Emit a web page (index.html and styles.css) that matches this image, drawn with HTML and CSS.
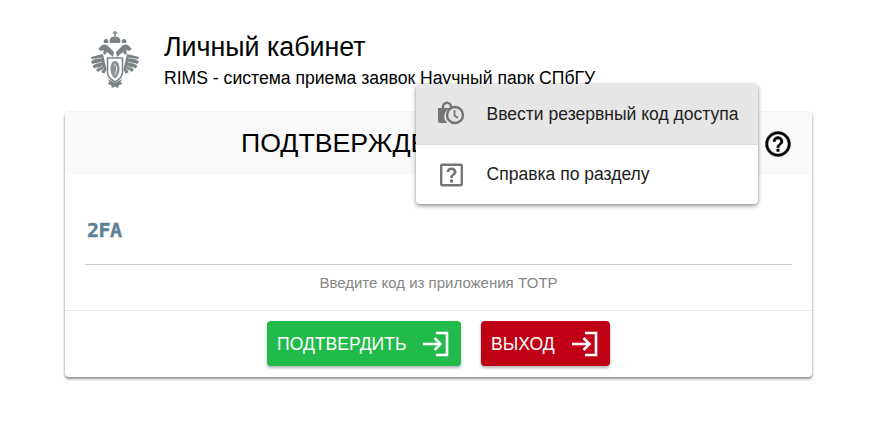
FILE: index.html
```html
<html>

<head>
  <meta charset="utf-8">
  <link rel="stylesheet" href="styles.css">
</head>

<body>
  <div class="page-header">
    <svg class="crest" viewBox="0 0 48 60" width="48" height="60">
      <g fill="#7b8386">
        <!-- crown -->
        <rect x="23.200" y="1" width="1.600" height="5"/>
        <rect x="21.800" y="2.300" width="4.400" height="1.300"/>
        <path d="M19 13c-1.500-4 1-6.500 5-6.500s6.500 2.500 5 6.500z"/>
        <path d="M13 13c-1-2 0-4 2-4s3 2 2 4zM31 13c-1-2 0-4 2-4s3 2 2 4z"/>
        <!-- heads and necks -->
        <path d="M7 19l3-3c2-2 5-2 7 0l6 6-1 5-6-5-2 3-2-2 1-3-3 1z"/>
        <path d="M41 19l-3-3c-2-2-5-2-7 0l-6 6 1 5 6-5 2 3 2-2-1-3 3 1z"/>
        <!-- wings -->
        <path d="M12 24L0 27l1 2.500 3-.5-4 2.500 1.500 2.500 3.500-1-3.500 3 2 2.500 3.500-2-2 3.500 2.500 2 3-3 0 3.500 3 1 2-4z"/>
        <path d="M36 24l12 3-1 2.500-3-.5 4 2.500-1.500 2.500-3.500-1 3.500 3-2 2.500-3.500-2 2 3.500-2.500 2-3-3 0 3.500-3 1-2-4z"/>
        <!-- tail -->
        <path d="M17 49l7 4 7-4-1.500 3 2 2-3.500 1-1 3-3-1.500-3 1.500-1-3-3.500-1 2-2z"/>
      </g>
      <g fill="none" stroke="#fff" stroke-width=".6">
        <path d="M2 29l9-1M3 34l8-2M5 39l7-3M9 43l4-5M46 29l-9-1M45 34l-8-2M43 39l-7-3M39 43l-4-5"/>
      </g>
      <path d="M16.500 28h15v14c0 5-4 8-7.500 10-3.500-2-7.500-5-7.500-10z" fill="#fff" stroke="#7b8386" stroke-width="1.600"/>
      <path d="M24 31c2.800 0 4.500 3 4.500 7.500S26.800 47 24 48.500c-2.800-1.500-4.500-5.500-4.500-10S21.200 31 24 31z" fill="#8d9497"/>
      <path d="M23 34c2 1 3 3 2.500 6s-1.500 4-2 5" fill="none" stroke="#fff" stroke-width=".8"/>
    </svg>
    <div class="header-text">
      <h1 class="header-title">Личный кабинет</h1>
      <p class="header-sub">RIMS - система приема заявок Научный парк СПбГУ</p>
    </div>
  </div>

  <div class="card">
    <div class="card-head">
      <span class="card-title">ПОДТВЕРЖДЕНИЕ ВХОДА</span>
      <svg class="help-icon" viewBox="0 0 24 24" width="30" height="30">
        <path stroke="#000" stroke-width=".35" d="M11 18h2v-2h-2v2zm1-16C6.480 2 2 6.480 2 12s4.480 10 10 10 10-4.480 10-10S17.520 2 12 2zm0 18c-4.410 0-8-3.590-8-8s3.590-8 8-8 8 3.590 8 8-3.590 8-8 8zm0-14c-2.210 0-4 1.790-4 4h2c0-1.100.9-2 2-2s2 .9 2 2c0 2-3 1.750-3 5h2c0-2.250 3-2.500 3-5 0-2.210-1.790-4-4-4z"/>
      </svg>
    </div>

    <div class="card-body">
      <div class="code-field">
        <span class="code-badge">2FA</span>
      </div>
      <p class="code-hint">Введите код из приложения TOTP</p>
    </div>

    <div class="card-actions">
      <button class="btn btn-green">ПОДТВЕРДИТЬ
        <svg viewBox="0 0 30 30" width="30" height="30"><path class="btn-icon" d="M2 15h17M13.500 9l6 6-6 6M15 4h11v22H15"/></svg>
      </button>
      <button class="btn btn-red">ВЫХОД
        <svg viewBox="0 0 30 30" width="30" height="30"><path class="btn-icon" d="M2 15h17M13.500 9l6 6-6 6M15 4h11v22H15"/></svg>
      </button>
    </div>
  </div>

  <!-- popup menu, opened from the help button -->
  <div class="menu">
    <div class="menu-item menu-item-active">
      <svg viewBox="0 0 30 30" width="30" height="30">
        <path fill="none" stroke="#757575" stroke-width="2.500" d="M7 11V8c0-2.500 2-4.200 4-4.200s4 1.700 4 4.200v2"/>
        <path fill="#757575" d="M2 9h13a8.500 8.500 0 0 0-3.500 15H4c-1.200 0-2-.8-2-2z"/>
        <circle cx="19" cy="16" r="8" fill="none" stroke="#757575" stroke-width="2.500"/>
        <path d="M18.500 11v5.500l3.500 2.500" fill="none" stroke="#757575" stroke-width="1.800"/>
      </svg>
      <span>Ввести резервный код доступа</span>
    </div>
    <div class="menu-item menu-item-last">
      <svg viewBox="0 0 30 30" width="30" height="30">
        <rect x="5.200" y="4.700" width="20.600" height="20.600" rx="1" fill="none" stroke="#757575" stroke-width="2.400"/>
        <path fill="#757575" d="M14 19.500h3v3h-3zM15.500 7.500c-3 0-5 1.900-5 4.500h2.800c0-1.200 1-2 2.200-2s2.200.8 2.200 2c0 2-3.700 2.200-3.700 6h2.800c0-2.700 3.700-3.200 3.700-6 0-2.600-2-4.500-5-4.500z"/>
      </svg>
      <span>Справка по разделу</span>
    </div>
  </div>
</body>

</html>
```

FILE: styles.css
```css
html, body {
  margin: 0;
  padding: 0;
}

body {
  width: 893px;
  height: 438px;
  overflow: hidden;
  background: #fff;
  font-family: "Liberation Sans", Arial, sans-serif;
  color: #000;
  position: relative;
}

.page-header {
  display: flex;
  align-items: center;
  padding: 30px 0 0 91px;
  height: 60px;
}

.crest {
  flex: none;
}

.header-text {
  margin: 0 0 2px 25px;
}

.header-title {
  margin: 0;
  font-size: 26.800px;
  font-weight: 400;
  line-height: 32px;
}

.header-sub {
  margin: 5px 0 0;
  font-size: 17.600px;
  line-height: 20px;
}

.card {
  margin: 22px 0 0 65px;
  width: 747px;
  height: 265px;
  background: #fff;
  border-radius: 4px;
  box-shadow: 0 2px 3px rgba(0, 0, 0, 0.45), 0 0 2px rgba(0, 0, 0, 0.12);
  display: flex;
  flex-direction: column;
}

.card-head {
  height: 63px;
  flex: none;
  background: #f9f9f9;
  border-radius: 4px 4px 0 0;
  display: grid;
  grid-template-columns: 1fr auto;
  align-items: center;
}

.card-title {
  font-size: 26.700px;
  line-height: 63px;
  grid-column: 1 / 3;
  grid-row: 1;
  padding-left: 176px;
}

.help-icon {
  grid-column: 2;
  grid-row: 1;
  margin-right: 19px;
}

.card-body {
  flex: 1;
  padding: 0 20px;
}

.code-field {
  height: 90px;
  box-sizing: border-box;
  border-bottom: 1px solid #cfcfcf;
  padding-top: 44px;
}

.code-badge {
  display: block;
  font-family: "DejaVu Sans Mono", monospace;
  font-weight: 700;
  font-size: 20px;
  line-height: 22px;
  letter-spacing: -0.500px;
  padding-left: 2px;
  color: #5f7f93;
  -webkit-text-stroke: 0.400px #5f7f93;
}

.code-hint {
  margin: 9px 0 0;
  text-align: center;
  font-size: 15px;
  line-height: 17px;
  color: #858585;
}

.card-actions {
  flex: none;
  height: 67px;
  box-sizing: border-box;
  border-top: 1px solid #e8e8e8;
  display: flex;
  justify-content: center;
  align-items: flex-start;
  gap: 20px;
  padding-top: 10px;
}

.btn {
  height: 45px;
  display: flex;
  align-items: center;
  justify-content: space-between;
  padding: 1px 10px 0 10px;
  border: 0;
  border-radius: 4px;
  color: #fff;
  font-family: inherit;
  font-size: 17.600px;
  box-shadow: 0 2px 3px rgba(0, 0, 0, 0.3);
}

.btn-green {
  width: 194px;
  background: #21ba4b;
}

.btn-red {
  width: 129px;
  background: #c00015;
}

.btn-icon {
  fill: none;
  stroke: #fff;
  stroke-width: 2.600;
}

.menu {
  position: absolute;
  left: 416px;
  top: 84px;
  width: 342px;
  height: 120px;
  background: #fff;
  border-radius: 4px;
  box-shadow: 0 2px 4px rgba(0, 0, 0, 0.4), 0 0 3px rgba(0, 0, 0, 0.1);
  overflow: hidden;
  font-size: 17.550px;
  color: #212121;
}

.menu-item {
  height: 61px;
  box-sizing: border-box;
  display: flex;
  align-items: center;
  gap: 20.500px;
  padding-left: 20px;
}

.menu-item-last {
  height: 59px;
}

.menu-item-active {
  background: #e6e6e6;
  border-bottom: 1px solid #dcdcdc;
}
```
